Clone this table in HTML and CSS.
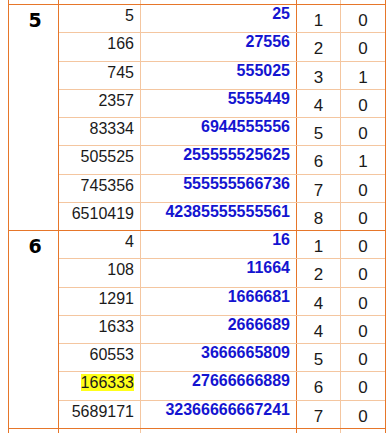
FILE: index.html
```html
<!DOCTYPE html>
<html>
<head>
<meta charset="utf-8">
<link rel="stylesheet" href="styles.css">
</head>
<body>
<div class="table">
  <div class="stub">
    <div class="c1"></div><div class="c2"></div><div class="c3"></div><div class="c4"></div><div class="c5"></div>
  </div>

  <div class="group">
    <div class="c1 num">5</div>
    <div class="rows">
      <div class="row"><div class="c2">5</div><div class="c3">25</div><div class="c4">1</div><div class="c5">0</div></div>
      <div class="row"><div class="c2">166</div><div class="c3">27556</div><div class="c4">2</div><div class="c5">0</div></div>
      <div class="row"><div class="c2">745</div><div class="c3">555025</div><div class="c4">3</div><div class="c5">1</div></div>
      <div class="row"><div class="c2">2357</div><div class="c3">5555449</div><div class="c4">4</div><div class="c5">0</div></div>
      <div class="row"><div class="c2">83334</div><div class="c3">6944555556</div><div class="c4">5</div><div class="c5">0</div></div>
      <div class="row"><div class="c2">505525</div><div class="c3">255555525625</div><div class="c4">6</div><div class="c5">1</div></div>
      <div class="row"><div class="c2">745356</div><div class="c3">555555566736</div><div class="c4">7</div><div class="c5">0</div></div>
      <div class="row"><div class="c2">6510419</div><div class="c3">42385555555561</div><div class="c4">8</div><div class="c5">0</div></div>
    </div>
  </div>

  <div class="group">
    <div class="c1 num">6</div>
    <div class="rows">
      <div class="row"><div class="c2">4</div><div class="c3">16</div><div class="c4">1</div><div class="c5">0</div></div>
      <div class="row"><div class="c2">108</div><div class="c3">11664</div><div class="c4">2</div><div class="c5">0</div></div>
      <div class="row"><div class="c2">1291</div><div class="c3">1666681</div><div class="c4">4</div><div class="c5">0</div></div>
      <div class="row"><div class="c2">1633</div><div class="c3">2666689</div><div class="c4">4</div><div class="c5">0</div></div>
      <div class="row"><div class="c2">60553</div><div class="c3">3666665809</div><div class="c4">5</div><div class="c5">0</div></div>
      <div class="row"><div class="c2"><span class="hl">166333</span></div><div class="c3">27666666889</div><div class="c4">6</div><div class="c5">0</div></div>
      <div class="row"><div class="c2">5689171</div><div class="c3">32366666667241</div><div class="c4">7</div><div class="c5">0</div></div>
    </div>
  </div>

  <div class="stub tail">
    <div class="c1"></div><div class="c2"></div><div class="c3"></div><div class="c4"></div><div class="c5"></div>
  </div>
</div>
</body>
</html>
```

FILE: styles.css
```css
html, body {
  margin: 0;
  background: #ffffff;
}
body {
  padding: 0 8px;
  font-family: "Liberation Sans", Arial, sans-serif;
  color: #1a1a1a;
}
.table {
  width: 378px;
  box-sizing: border-box;
  border-left: 1px solid #e6762a;
  border-right: 1px solid #e6762a;
}
.stub {
  display: flex;
  height: 5px;
  box-sizing: border-box;
  border-bottom: 1px solid #e6762a;
}
.stub.tail {
  border-bottom: none;
}
.c1 {
  width: 50px;
  flex: none;
  box-sizing: border-box;
  border-right: 1px solid #e6762a;
}
.c2 {
  width: 82px;
  flex: none;
  box-sizing: border-box;
  border-right: 1px solid #f4c6a0;
}
.c3 {
  width: 156px;
  flex: none;
  box-sizing: border-box;
  border-right: 1px solid #e6762a;
}
.c4 {
  width: 44px;
  flex: none;
  box-sizing: border-box;
  border-right: 1px solid #f4c6a0;
}
.c5 {
  width: 44px;
  flex: none;
  box-sizing: border-box;
}
.group {
  display: flex;
  border-bottom: 1px solid #e6762a;
}
.num {
  font-family: "DejaVu Sans", "Liberation Sans", sans-serif;
  font-weight: bold;
  font-size: 19px;
  line-height: 22px;
  text-align: center;
  padding-top: 4px;
  padding-left: 3px;
  color: #000;
}
.rows {
  display: flex;
  flex-direction: column;
}
.row {
  display: flex;
  height: 28.25px;
  box-sizing: border-box;
  border-bottom: 1px solid #f4c6a0;
}
.row:last-child {
  height: 27.25px;
  border-bottom: none;
}
.row .c2 {
  font-size: 16px;
  line-height: 18px;
  text-align: right;
  padding: 2px 6px 0 0;
}
.row .c3 {
  font-size: 16px;
  line-height: 18px;
  font-weight: bold;
  color: #1414d0;
  text-align: right;
  padding: 0 6px 0 0;
}
.row .c4, .row .c5 {
  font-size: 17px;
  line-height: 19px;
  text-align: center;
  padding-top: 6px;
}
.hl {
  background: #ffff1a;
}
```
